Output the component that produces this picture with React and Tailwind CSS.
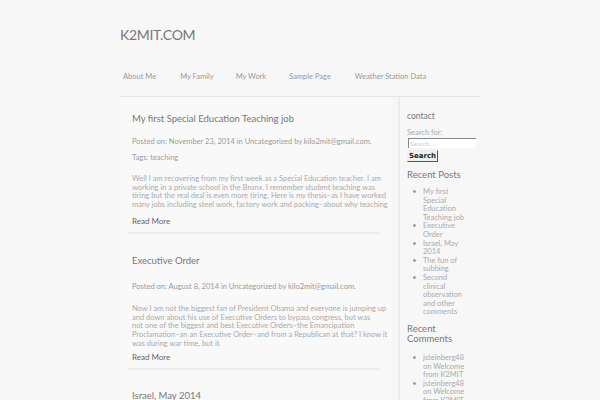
import React from "react";

const font = { fontFamily: "Lato, 'Open Sans', sans-serif" };

function Lines({ lines }) {
  return lines.map((l, i) => (
    <React.Fragment key={i}>
      {l}
      {i < lines.length - 1 && <br />}
    </React.Fragment>
  ));
}

function Post({ title, posted, tags, lines }) {
  return (
    <div className="pl-[12px] pr-[6px]">
      <h2 className="text-[9.5px] leading-[12px] text-[#777] pt-[16px]">{title}</h2>
      <p className={`${tags ? "mt-[12px]" : "mt-[15px]"} text-[7.5px] leading-[9px] text-[#999]`}>
        Posted on: {posted} in Uncategorized by kilo2mit@gmail.com.
      </p>
      {tags && (
        <p className="mt-[7px] text-[7.5px] leading-[9px] text-[#999]">Tags: teaching</p>
      )}
      <p className={`${tags ? "mt-[13px]" : "mt-[14px]"} text-[7.5px] leading-[8.7px] text-[#aaa] whitespace-nowrap`}>
        <Lines lines={lines} />
      </p>
      <p className={`${tags ? "mt-[6px]" : "mt-[4px]"} text-[8px] leading-[10px] text-[#666]`}>Read More</p>
      <div className="mt-[6px] -ml-[4px] mr-[6px] h-[2px] bg-[#ececec]" />
    </div>
  );
}

function Item({ lines }) {
  return (
    <li className="flex">
      <span className="w-[17px] shrink-0 text-center text-[#999]">•</span>
      <span>
        <Lines lines={lines} />
      </span>
    </li>
  );
}

export default function App() {
  return (
    <div className="w-[600px] h-[400px] overflow-hidden bg-[#f7f7f7]" style={font}>
      <div className="w-[360px] ml-[120px]">
        <header className="pt-[27px]">
          <h1 className="text-[14px] leading-[16px] text-[#777] tracking-[-0.3px]">K2MIT.COM</h1>
          <nav className="mt-[29px] flex text-[7.5px] leading-[10px] text-[#999]">
            <span className="ml-[3px]">About Me</span>
            <span className="ml-[24px]">My Family</span>
            <span className="ml-[22px]">My Work</span>
            <span className="ml-[23px]">Sample Page</span>
            <span className="ml-[24px]">Weather Station Data</span>
          </nav>
          <div className="mt-[14px] h-[1px] bg-[#e5e5e5]" />
        </header>
        <div className="flex">
          <main className="w-[272px] bg-[#f9f9f9] pb-[20px]">
            <Post
              title="My first Special Education Teaching job"
              posted="November 23, 2014"
              tags
              lines={[
                "Well I am recovering from my first week as a Special Education teacher. I am",
                "working in a private school in the Bronx.  I remember student teaching was",
                "tiring but the real deal is even more tiring. Here is my thesis–as I have worked",
                "many jobs including steel work, factory work and packing–about why teaching",
              ]}
            />
            <div className="h-[5px]" />
            <Post
              title="Executive Order"
              posted="August 8, 2014"
              lines={[
                "Now I am not the biggest fan of President Obama and everyone is jumping up",
                "and down about his use of Executive Orders to bypass congress, but was",
                "not one of the biggest and best Executive Orders–the Emancipation",
                "Proclamation–an an Executive Order–and from a Republican at that?  I know it",
                "was during war time, but it",
              ]}
            />
            <div className="h-[4px]" />
            <div className="pl-[12px]">
              <h2 className="text-[9.5px] leading-[12px] text-[#777] pt-[16px]">Israel, May 2014</h2>
            </div>
          </main>
          <div className="w-[8px] border-r-[2px] border-[#ebebeb]" />
          <aside className="pl-[7px] pt-[14px] w-[80px] text-[#888]">
            <h3 className="text-[8.5px] leading-[11px] text-[#777]">contact</h3>
            <label className="block mt-[6px] text-[7.5px] leading-[9px] text-[#aaa]">Search for:</label>
            <div className="mt-[1px] ml-[1px] w-[68px] h-[10px] bg-white border-t-[1px] border-l-[1px] border-[#888] text-[6.5px] leading-[9px] text-[#ccc] pl-[1px] overflow-hidden">
              Search ...
            </div>
            <div
              className="mt-[2px] block w-fit px-[1px] h-[12px] bg-[#f0f0f0] border-[1px] border-t-[#eee] border-l-[#eee] border-r-[#555] border-b-[#555] text-[7px] leading-[10px] text-[#222]"
              style={{ fontFamily: "'DejaVu Sans', sans-serif", fontWeight: 700 }}
            >
              Search
            </div>
            <h3 className="mt-[7px] text-[9.5px] leading-[12px] text-[#777]">Recent Posts</h3>
            <ul className="mt-[7px] -ml-[1px] text-[7.5px] leading-[8.6px] text-[#aaa]">
              <Item lines={["My first", "Special", "Education", "Teaching job"]} />
              <Item lines={["Executive", "Order"]} />
              <Item lines={["Israel, May", "2014"]} />
              <Item lines={["The fun of", "subbing"]} />
              <Item lines={["Second", "clinical", "observation", "and other", "comments"]} />
            </ul>
            <h3 className="mt-[7px] text-[9.5px] leading-[10px] text-[#777]">
              Recent
              <br />
              Comments
            </h3>
            <ul className="mt-[10px] -ml-[1px] text-[7.5px] leading-[8.6px] text-[#aaa]">
              <Item lines={["jsteinberg48", "on Welcome", "from K2MIT"]} />
              <Item lines={["jsteinberg48", "on Welcome", "from K2MIT"]} />
            </ul>
          </aside>
        </div>
      </div>
    </div>
  );
}
